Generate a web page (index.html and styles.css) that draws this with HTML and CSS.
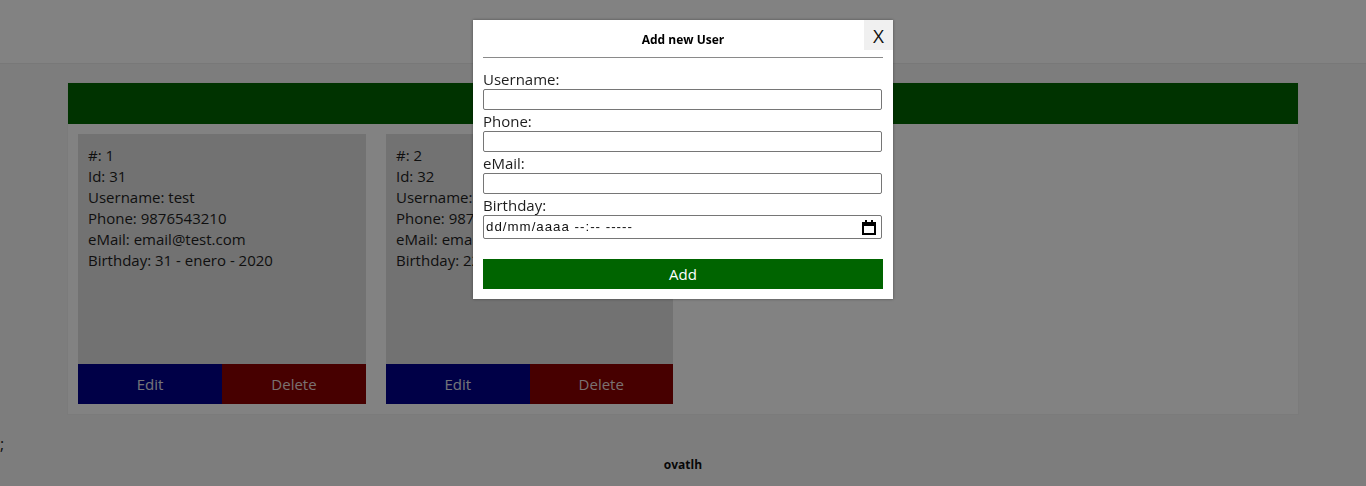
FILE: index.html
```html
<!DOCTYPE html>
<html lang="es">
<head>
<meta charset="utf-8">
<title>Users</title>
<link rel="stylesheet" href="styles.css">
</head>
<body>
<header class="topbar"></header>
<main class="panel">
  <div class="panel-bar"></div>
  <div class="cards">
    <div class="card">
      <div class="card-body">
        <div>#: 1</div>
        <div>Id: 31</div>
        <div>Username: test</div>
        <div>Phone: 9876543210</div>
        <div>eMail: email@test.com</div>
        <div>Birthday: 31 - enero - 2020</div>
      </div>
      <div class="card-actions">
        <button class="btn btn-edit">Edit</button>
        <button class="btn btn-delete">Delete</button>
      </div>
    </div>
    <div class="card">
      <div class="card-body">
        <div>#: 2</div>
        <div>Id: 32</div>
        <div>Username: test2</div>
        <div>Phone: 9876543211</div>
        <div>eMail: email2@test.com</div>
        <div>Birthday: 22 - febrero - 2020</div>
      </div>
      <div class="card-actions">
        <button class="btn btn-edit">Edit</button>
        <button class="btn btn-delete">Delete</button>
      </div>
    </div>
  </div>
</main>
<div class="stray">;</div>
<footer class="footer">ovatlh</footer>

<div class="overlay">
  <div class="modal">
    <div class="modal-head">
      <span class="modal-title">Add new User</span>
      <button class="modal-close">X</button>
    </div>
    <hr class="modal-rule">
    <form class="modal-form">
      <label class="field-label">Username:</label>
      <input class="field-input" type="text">
      <label class="field-label">Phone:</label>
      <input class="field-input" type="text">
      <label class="field-label">eMail:</label>
      <input class="field-input" type="text">
      <label class="field-label">Birthday:</label>
      <div class="field-date">
        <span class="date-text">dd/mm/aaaa --:-- -----</span>
        <svg class="date-icon" width="14" height="15" viewBox="0 0 14 15">
          <rect x="1" y="3" width="12" height="11" fill="none" stroke="#000" stroke-width="2"/>
          <rect x="1" y="2" width="12" height="4" fill="#000"/>
          <rect x="3" y="0" width="2" height="3" fill="#000"/>
          <rect x="9" y="0" width="2" height="3" fill="#000"/>
        </svg>
      </div>
      <button class="add-btn" type="button">Add</button>
    </form>
  </div>
</div>
</body>
</html>
```

FILE: styles.css
```css
* { box-sizing: border-box; }

html, body {
  margin: 0;
  padding: 0;
}

body {
  background: #f6f6f6;
  font-family: "Open Sans", "Noto Sans", sans-serif;
  font-size: 16px;
  color: #222;
  height: 486px;
  overflow: hidden;
}

.topbar {
  height: 64px;
  background: #ffffff;
  border-bottom: 1px solid #ececec;
}

.panel {
  margin: 19px 68px 20px;
  background: #ffffff;
  box-shadow: 0 0 0 1px #f2f2f2;
  padding-bottom: 10px;
}

.panel-bar {
  height: 41px;
  background: #006400;
}

.cards {
  display: flex;
  gap: 20px;
  padding: 10px 10px 0;
}

.card {
  width: 288px;
  height: 270px;
  background: #e0e0e0;
  display: flex;
  flex-direction: column;
}

.card + .card {
  width: 287px;
}

.card-body {
  flex: 1;
  padding: 11px 10px;
  font-size: 15px;
  line-height: 21px;
  color: #1e1e1e;
}

.card-actions {
  display: flex;
  height: 40px;
}

.btn {
  flex: 1;
  border: 0;
  margin: 0;
  font-family: inherit;
  font-size: 15px;
  color: #e4e4ee;
}

.btn-edit { background: #00008b; }
.btn-delete { background: #8b0000; color: #eedede; }

.stray {
  font-size: 16px;
  line-height: 21px;
  height: 21px;
}

.footer {
  text-align: center;
  font-weight: bold;
  font-size: 12px;
  line-height: 20px;
  color: #111;
}

.overlay {
  position: fixed;
  inset: 0;
  background: rgba(0, 0, 0, 0.49);
  display: flex;
  justify-content: center;
  align-items: flex-start;
  padding-top: 20px;
}

.modal {
  position: relative;
  width: 420px;
  background: #ffffff;
  padding: 0 10px 10px;
  box-shadow: 0 0 3px rgba(0, 0, 0, 0.4);
}

.modal-head {
  height: 37px;
  padding-top: 2px;
  display: flex;
  align-items: center;
  justify-content: center;
}

.modal-title {
  font-weight: bold;
  font-size: 12px;
  color: #000;
}

.modal-close {
  position: absolute;
  top: 0;
  right: 0;
  width: 29px;
  height: 30px;
  border: 0;
  background: #f0f0f0;
  font-family: "Open Sans", sans-serif;
  font-size: 19px;
  color: #111;
  padding: 2px 0 0;
}

.modal-rule {
  margin: 0;
  border: 0;
  border-top: 1px solid #8a8a8a;
  height: 0;
}

.modal-form {
  display: flex;
  flex-direction: column;
  padding-top: 10px;
}

.field-label {
  font-size: 15px;
  line-height: 20px;
  height: 21px;
  padding-top: 1px;
  color: #1e1e1e;
}

.field-input {
  width: 399px;
  height: 21px;
  margin: 0;
  border: 1px solid #767676;
  border-radius: 2px;
  padding: 1px 2px;
}

.field-date {
  width: 399px;
  height: 24px;
  border: 1px solid #767676;
  border-radius: 2px;
  display: flex;
  align-items: center;
  justify-content: space-between;
  padding: 0 5px 0 2px;
}

.date-text {
  font-family: "Liberation Sans", Arial, sans-serif;
  font-size: 13.3px;
  line-height: 16px;
  letter-spacing: 1px;
  color: #111;
}

.date-icon {
  display: block;
}

.add-btn {
  margin-top: 20px;
  height: 30px;
  width: 400px;
  border: 0;
  background: #006400;
  color: #ffffff;
  font-family: inherit;
  font-size: 15px;
}
```
